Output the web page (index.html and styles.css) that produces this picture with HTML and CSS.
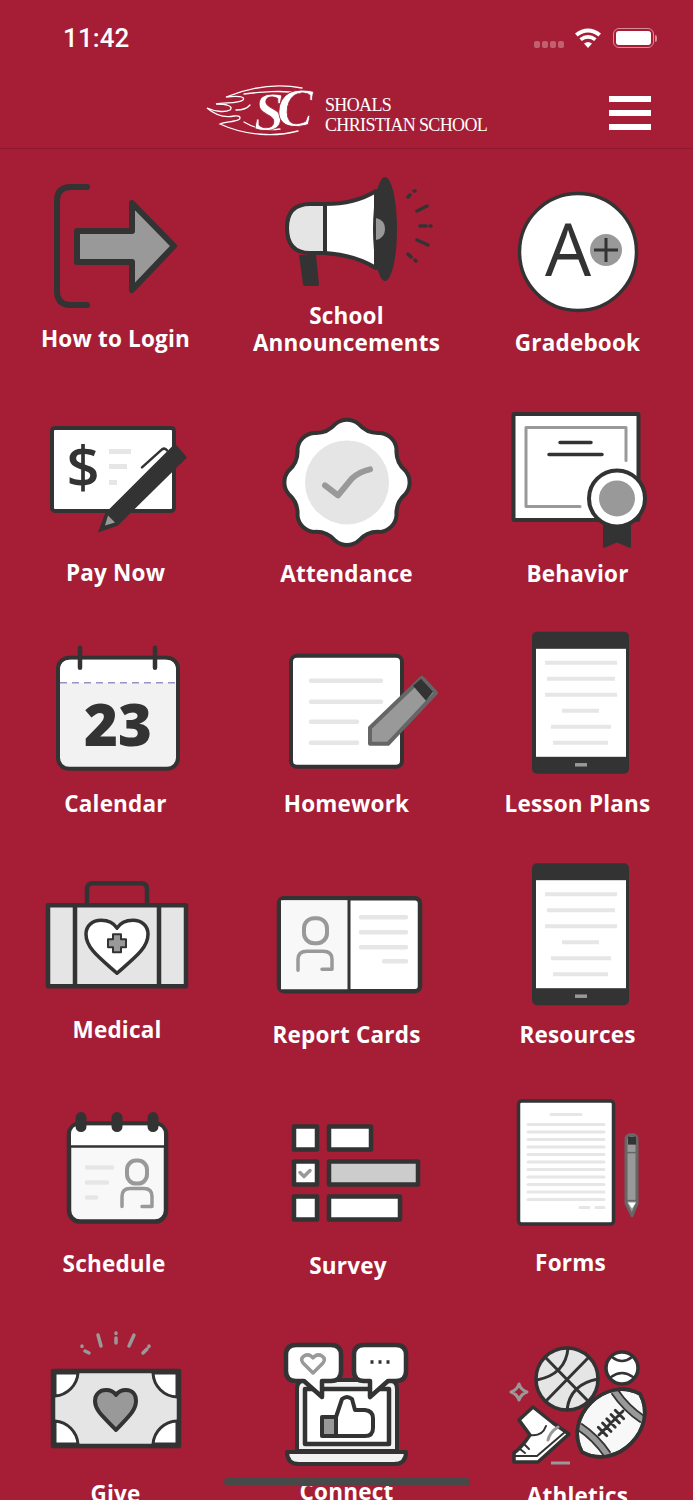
FILE: index.html
```html
<!DOCTYPE html>
<html>
  <head>
    <meta name="viewport" content="width=device-width, initial-scale=1" />
    <title>Shoals Christian School</title>
    <link rel="stylesheet" href="styles.css">
  </head>
  <body>
    <div class="topbar">
      <div class="status">
        <span class="time">11:42</span>
        <div class="status-right">
          <div class="signal"><i></i><i></i><i></i><i></i></div>
          <svg class="wifi" viewBox="0 0 26 20" width="26" height="20">
            <path d="M13 20 L9 15.5 Q13 12.5 17 15.5Z" />
            <path d="M6.8 13 L4.4 10.3 Q13 3.8 21.6 10.3 L19.2 13 Q13 8.4 6.8 13Z" />
            <path d="M2.6 8.4 L0 5.6 Q13 -4.4 26 5.6 L23.4 8.4 Q13 0.6 2.6 8.4Z" />
          </svg>
          <div class="battery"><div class="battery-fill"></div></div>
          <div class="battery-tip"></div>
        </div>
      </div>
      <div class="nav">
        <svg class="logo" viewBox="207 85 108 50" width="108" height="50">
          <path d="M302 88 C275 83 248 88 226 97 C236 96 246 96 243 100 C238 104 224 102 216 104 C226 104 234 106 230 110 C224 113 214 111 207 108 C214 114 224 118 234 116 C242 115 242 120 234 121 C230 122 224 122 220 124 C246 136 276 137 298 131" />
          <path d="M300 93 C280 90 262 92 244 94 M250 105 C246 110 240 110 236 110 M244 122 C254 128 266 131 280 129" />
          <text class="monogram" x="254" y="130">S<tspan dx="-7" dy="-4">C</tspan></text>
        </svg>
        <div class="logo-text">SHOALS<br />CHRISTIAN SCHOOL</div>
        <div class="menu"><i></i><i></i><i></i></div>
      </div>
    </div>

    <div class="grid">
      <!-- row 1 -->
      <div class="cell">
        <svg class="icon" viewBox="0 150 231 179">
          <path d="M87 187 H71 Q57 187 57 201 V291 Q57 305 71 305 H87" stroke-width="6" />
          <path class="g" d="M77 231 H132 V203 L174 246 L132 290 V262 H77Z" stroke-width="6" />
        </svg>
        <div class="label-row"><div class="label up-4">How to Login</div></div>
      </div>
      <div class="cell">
        <svg class="icon" viewBox="231 150 231 179">
          <path class="d" d="M299 255 L316 255 L319 284 Q319 286 317 286 H305 Q303 286 303 284Z" />
          <path class="l" d="M325 204 H310 Q287 204 287 228 Q287 253 310 253 H325Z" stroke-width="4" />
          <path class="w" d="M325 204 Q355 204 376 191 V268 Q355 255 325 253Z" stroke-width="4" />
          <ellipse class="d" cx="385" cy="229" rx="12" ry="52" />
          <path class="g no" d="M376 218 Q385 220 385 229 Q385 238 376 240Z" />
          <path d="M408 197 L410 195 M414 191 L415 191 M417 211 L427 206 M420 226 L426 226 M430 226 L431 226 M417 240 L428 245 M408 254 L411 257 M415 260 L416 261" stroke-width="3.5" />
        </svg>
        <div class="label-row"><div class="label">School<br />Announcements</div></div>
      </div>
      <div class="cell">
        <svg class="icon" viewBox="462 150 231 179">
          <circle class="w" cx="578" cy="252" r="58.5" stroke-width="3.5" />
          <text class="grade" x="568" y="276">A</text>
          <circle class="g no" cx="606" cy="250" r="16" />
          <path d="M594 250 H618 M606 238 V262" stroke-width="3" stroke-linecap="butt" />
        </svg>
        <div class="label-row"><div class="label">Gradebook</div></div>
      </div>

      <!-- row 2 -->
      <div class="cell">
        <svg class="icon" viewBox="0 380.6 231 179">
          <rect class="w" x="52" y="427.5" width="122" height="83" rx="3" stroke-width="4" />
          <text class="dollar" x="83" y="488">$</text>
          <path class="ln" d="M109 451 H131 M109 466 H127 M109 482 H117" stroke-width="5" stroke-linecap="butt" />
          <path d="M142 467 L162 449 Q165 447 167 450" stroke-width="2.5" />
          <path class="d" d="M175 443 L187 457 L118 525 L98 532 L105 513Z" />
          <path class="g no" d="M108 515 L115 522 L105 525Z" />
        </svg>
        <div class="label-row"><div class="label up-1">Pay Now</div></div>
      </div>
      <div class="cell">
        <svg class="icon" viewBox="231 380.6 231 179">
          <path class="w" stroke-width="4" d="M405.4 470.4 A18 18 0 0 1 405.4 493.6 A26 26 0 0 0 396.5 515.1 A18 18 0 0 1 380.1 531.5 A26 26 0 0 0 358.6 540.4 A18 18 0 0 1 335.4 540.4 A26 26 0 0 0 313.9 531.5 A18 18 0 0 1 297.5 515.1 A26 26 0 0 0 288.6 493.6 A18 18 0 0 1 288.6 470.4 A26 26 0 0 0 297.5 448.9 A18 18 0 0 1 313.9 432.5 A26 26 0 0 0 335.4 423.6 A18 18 0 0 1 358.6 423.6 A26 26 0 0 0 380.1 432.5 A18 18 0 0 1 396.5 448.9 A26 26 0 0 0 405.4 470.4Z" />
          <circle class="l no" cx="347" cy="482" r="42" />
          <path class="gl" d="M325 485 L338 495 L352 478 Q360 471 370 469" stroke-width="6" />
        </svg>
        <div class="label-row"><div class="label">Attendance</div></div>
      </div>
      <div class="cell">
        <svg class="icon" viewBox="462 380.6 231 179">
          <rect class="w" x="513.5" y="413.5" width="125" height="106" rx="1" stroke-width="4" />
          <path class="gl" d="M580 506 H526 V427 H626 V460" stroke-width="3" />
          <path d="M560 442 H591 M549 454 H602" stroke-width="3.5" />
          <path class="d" d="M603 520 H631 V546 Q631 548 629 547 L617 542 L605 547 Q603 548 603 546Z" />
          <circle class="w" cx="617" cy="498" r="28" stroke-width="4" />
          <circle class="g no" cx="617" cy="498" r="18" />
        </svg>
        <div class="label-row"><div class="label">Behavior</div></div>
      </div>

      <!-- row 3 -->
      <div class="cell">
        <svg class="icon" viewBox="0 611.2 231 179">
          <rect class="o" x="58" y="658" width="120" height="111" rx="11" stroke-width="4" />
          <path class="w no" d="M60 683 V671 Q60 660 71 660 H165 Q176 660 176 671 V683Z" />
          <path class="dash" d="M60 683 H176" stroke-width="1.5" />
          <path d="M80 648 V668 M155 648 V668" stroke-width="4.5" />
          <text class="date" x="118" y="746">23</text>
        </svg>
        <div class="label-row"><div class="label">Calendar</div></div>
      </div>
      <div class="cell">
        <svg class="icon" viewBox="231 611.2 231 179">
          <rect class="w" x="291" y="656" width="111" height="111" rx="6" stroke-width="4" />
          <path class="ln" d="M311 681 H381 M311 702 H381 M311 722 H357 M311 743 H357" stroke-width="4.5" />
          <path class="g pen" d="M370 744 V728 L422 678 L436 693 L388 744Z" stroke-width="4" />
          <path class="d" d="M413 686 L421 679 L433 692 L426 701Z" />
        </svg>
        <div class="label-row"><div class="label">Homework</div></div>
      </div>
      <div class="cell">
        <svg class="icon" viewBox="462 611.2 231 179">
          <g id="tablet">
            <rect class="d" x="532" y="632" width="97" height="142" rx="5" />
            <rect class="w no" x="536" y="649" width="90" height="108" />
            <path class="ln" d="M545 663 H617 M547 679 H615 M545 695 H617 M562 711 H599 M551 727 H611 M553 743 H608" stroke-width="4" stroke-linecap="butt" />
            <path class="gl" d="M575 765 H587" stroke-width="3.5" stroke-linecap="butt" />
          </g>
        </svg>
        <div class="label-row"><div class="label">Lesson Plans</div></div>
      </div>

      <!-- row 4 -->
      <div class="cell">
        <svg class="icon" viewBox="0 841.8 231 179">
          <path d="M87 903 V889 Q87 883 93 883 H141 Q147 883 147 889 V903" stroke-width="4.5" />
          <rect class="l" x="48" y="905" width="138" height="81" stroke-width="4.5" />
          <path d="M75 905 V986 M159 905 V986" stroke-width="4.5" />
          <path class="w" d="M117 973 C100 958 86 948 86 934 C86 925 93 920 101 920 C108 920 114 923 117 928 C120 923 126 920 133 920 C141 920 148 925 148 934 C148 948 134 958 117 973Z" stroke-width="3.5" />
          <path class="g" d="M113 934 H121 V939 H126 V947 H121 V952 H113 V947 H108 V939 H113Z" stroke-width="2" />
        </svg>
        <div class="label-row"><div class="label up-5 nudge-r">Medical</div></div>
      </div>
      <div class="cell">
        <svg class="icon" viewBox="231 841.8 231 179">
          <rect class="w" x="279" y="898" width="141" height="93" rx="5" stroke-width="4.5" />
          <path class="soft no" d="M281 900 H349 V989 H281Z" />
          <path d="M349 898 V991" stroke-width="3" />
          <rect class="gl" x="304" y="918" width="23" height="25" rx="10" stroke-width="4" />
          <path class="gl" d="M298 970 V959 Q298 951 307 951 H323 Q332 951 332 959 V969 H322" stroke-width="3.5" />
          <path class="ln" d="M361 917 H406 M361 932 H406 M361 947 H406 M384 961 H406" stroke-width="4.5" />
        </svg>
        <div class="label-row"><div class="label">Report Cards</div></div>
      </div>
      <div class="cell">
        <svg class="icon" viewBox="462 841.8 231 179"><use href="#tablet" y="231" /></svg>
        <div class="label-row"><div class="label">Resources</div></div>
      </div>

      <!-- row 5 -->
      <div class="cell">
        <svg class="icon" viewBox="0 1072.4 231 179">
          <rect class="soft" x="69" y="1124" width="97" height="98" rx="11" stroke-width="4.5" />
          <path class="w no" d="M71 1146 V1135 Q71 1126 80 1126 H155 Q164 1126 164 1135 V1146Z" />
          <path d="M69 1147 H166" stroke-width="2.5" stroke-linecap="butt" />
          <path d="M81 1118 V1127 M117 1118 V1127 M153 1118 V1127" stroke-width="11" />
          <path class="ln" d="M87 1168 H112 M87 1183 H107 M87 1198 H96" stroke-width="4.5" />
          <rect class="gl" x="127" y="1161" width="20" height="23" rx="9" stroke-width="4" />
          <path class="gl" d="M122 1207 V1197 Q122 1189 130 1189 H144 Q152 1189 152 1197 V1207 H142" stroke-width="3.5" />
        </svg>
        <div class="label-row"><div class="label up-1 nudge-l">Schedule</div></div>
      </div>
      <div class="cell">
        <svg class="icon" viewBox="231 1072.4 231 179">
          <rect class="w" x="294" y="1127" width="23" height="23" stroke-width="4.5" />
          <rect class="w" x="329" y="1127" width="42" height="23" stroke-width="4.5" />
          <rect class="w" x="294" y="1162" width="23" height="23" stroke-width="4.5" />
          <rect class="mid" x="329" y="1162" width="89" height="23" stroke-width="4.5" />
          <rect class="w" x="294" y="1197" width="23" height="23" stroke-width="4.5" />
          <rect class="w" x="329" y="1197" width="71" height="23" stroke-width="4.5" />
          <path class="gl" d="M300 1173 L304 1177 L310 1171" stroke-width="3.5" />
        </svg>
        <div class="label-row"><div class="label down-1 nudge-r">Survey</div></div>
      </div>
      <div class="cell">
        <svg class="icon" viewBox="462 1072.4 231 179">
          <rect class="w" x="518.5" y="1101.5" width="95" height="123" rx="3" stroke-width="3.5" />
          <path class="ln" d="M551 1115 H581 M528 1125 H604 M528 1132.5 H604 M528 1140 H604 M528 1147.5 H604 M528 1155 H604 M528 1162.5 H604 M528 1170 H604 M528 1177.5 H604 M528 1185 H604 M528 1192.5 H604 M528 1200 H604 M580 1208 H589 M596 1208 H604" stroke-width="3" />
          <path class="g pen" d="M626 1140 Q626 1135 632 1135 Q637 1135 637 1140 V1204 L632 1216 L626 1204Z" stroke-width="3" />
          <rect class="d" x="628" y="1137" width="8" height="8" />
          <path class="w no" d="M628 1203 H636 L632 1209Z" />
          <path class="pen" d="M627 1153 H637" stroke-width="1.5" stroke-linecap="butt" />
          <path class="pen" d="M627 1201 H637" stroke-width="1.5" stroke-linecap="butt" />
        </svg>
        <div class="label-row"><div class="label up-2 forms">Forms</div></div>
      </div>

      <!-- row 6 -->
      <div class="cell">
        <svg class="icon" viewBox="0 1303 231 179">
          <path class="gl" d="M98 1335 L101 1346 M134 1335 L129 1346 M116 1333 V1333.5 M116 1338 V1343 M82 1346 V1346.5 M85 1351 L89 1353 M149 1346 V1346.5 M147 1349 L143 1353" stroke-width="3.5" />
          <rect class="l" x="53" y="1371" width="126" height="75" stroke-width="4.5" />
          <path class="w" d="M55 1373 H78 A25 25 0 0 1 55 1396Z M177 1373 H153 A25 25 0 0 0 177 1397Z M55 1444 H78 A25 25 0 0 0 55 1421Z M177 1444 H153 A25 25 0 0 1 177 1421Z" stroke-width="3" />
          <path class="g" d="M116 1430 C105 1418 95 1411 95 1401 C95 1394 100 1390 106 1390 C110 1390 114 1392 116 1395 C118 1392 122 1390 126 1390 C132 1390 136 1394 136 1401 C136 1411 127 1418 116 1430Z" stroke-width="4" />
        </svg>
        <div class="label-row"><div class="label up-2">Give</div></div>
      </div>
      <div class="cell">
        <svg class="icon" viewBox="231 1303 231 179">
          <path class="o" d="M297 1451 V1389 Q297 1380 306 1380 H388 Q397 1380 397 1389 V1451Z" stroke-width="4" />
          <rect class="w" x="305" y="1389" width="84" height="55" stroke-width="4.5" />
          <path class="w" d="M336 1417 L342 1399 Q347 1395 352 1399 L355 1410 H365 Q373 1411 373 1418 V1428 Q373 1436 365 1436 H336Z" stroke-width="4" />
          <rect class="g" x="322" y="1417" width="14" height="19" stroke-width="4" />
          <path class="o" d="M287 1452 H406 Q406 1464 394 1464 H299 Q287 1464 287 1452Z" stroke-width="4" />
          <path class="w" d="M296 1345 H331 Q341 1345 341 1355 V1371 Q341 1381 331 1381 H322 V1397 L304 1381 H296 Q286 1381 286 1371 V1355 Q286 1345 296 1345Z" stroke-width="4.5" />
          <path class="gl" d="M313 1373 L303 1363 Q300 1359 304 1356 Q309 1353 313 1358 Q317 1353 322 1356 Q326 1359 323 1363Z" stroke-width="3.5" />
          <path class="w" d="M364 1345 H396 Q406 1345 406 1355 V1371 Q406 1381 396 1381 H388 L370 1397 V1381 H364 Q354 1381 354 1371 V1355 Q354 1345 364 1345Z" stroke-width="4.5" />
          <path d="M370.5 1362 H373.5 M378.5 1362 H381.5 M386.5 1362 H389.5" stroke-width="3.5" stroke-linecap="butt" />
        </svg>
        <div class="label-row"><div class="label up-4">Connect</div></div>
      </div>
      <div class="cell">
        <svg class="icon" viewBox="462 1303 231 179">
          <circle class="l" cx="567" cy="1379" r="31" stroke-width="3.5" />
          <path d="M546 1358 L588 1401 M588 1358 L546 1401 M568 1348 Q566 1374 537 1380 M598 1379 Q570 1384 567 1410" stroke-width="3" />
          <circle class="w" cx="622" cy="1368" r="16" stroke-width="3.5" />
          <path d="M612 1357 Q622 1365 632 1357 M611 1377 Q622 1369 633 1377" stroke-width="2.5" />
          <path class="gl" d="M519 1384 Q521 1390 527 1392 Q521 1394 519 1400 Q517 1394 511 1392 Q517 1390 519 1384Z" stroke-width="3" />
          <g transform="translate(611 1423) rotate(-45)">
            <path class="soft" d="M-41 0 C-30 -38 30 -38 41 0 C30 38 -30 38 -41 0Z" stroke-width="3.5" />
            <path d="M-25 -20 Q-21 0 -25 20 M25 -20 Q21 0 25 20" stroke-width="9" stroke-linecap="butt" />
            <path class="gl" d="M-25 -20 Q-21 0 -25 20 M25 -20 Q21 0 25 20" stroke-width="5.5" stroke-linecap="butt" />
            <path d="M-41 0 C-30 -38 30 -38 41 0 C30 38 -30 38 -41 0Z" stroke-width="3.5" />
            <path d="M-17 0 H17 M-12 -6 V6 M-6 -6 V6 M0 -6 V6 M6 -6 V6 M12 -6 V6" stroke-width="2.8" />
          </g>
          <path class="w" d="M533 1407 L519 1420 L530 1435 Q522 1447 514 1453 V1462 H538 L569 1434 L553 1423Z" stroke-width="3.5" />
          <path d="M515 1456 H537 L565 1432 M530 1435 Q542 1437 546 1426 M524 1444 L529 1449 M520 1449 L525 1453" stroke-width="2" />
          <path class="gl" d="M558 1427 Q550 1432 548 1440" stroke-width="3" />
          <path class="gl" d="M551 1463 H570" stroke-width="3" stroke-linecap="butt" />
        </svg>
        <div class="label-row"><div class="label">Athletics</div></div>
      </div>
    </div>

    <div class="home-bar"></div>
  </body>
</html>
```

FILE: styles.css
```css
* {
  box-sizing: border-box;
}

html,
body {
  height: 1500px;
  overflow: hidden;
}

body {
  margin: 0;
  position: relative;
  background-color: #a51e36;
  color: white;
  font-family: "Open Sans", Arial, sans-serif;
}

/* Status bar and logo row */
.topbar {
  height: 149px;
  border-bottom: 1px solid #8f1a2f;
}

.status {
  display: flex;
  align-items: flex-start;
  height: 76px;
  padding: 23px 36px 0 63px;
}

.time {
  font-family: Roboto, sans-serif;
  font-size: 26px;
  font-weight: 500;
  line-height: 31px;
  letter-spacing: 0.1px;
}

.status-right {
  display: flex;
  align-items: center;
  margin-left: auto;
  padding-top: 5px;
}

.signal {
  display: flex;
  gap: 2px;
  margin: 13px 11px 0 0;
}

.signal i {
  width: 6px;
  height: 7px;
  border-radius: 2px;
  background: rgba(255, 255, 255, 0.3);
}

.wifi {
  fill: white;
  margin-right: 12px;
}

.battery {
  width: 41px;
  height: 20px;
  padding: 2px;
  border: 1.5px solid rgba(255, 255, 255, 0.5);
  border-radius: 6px;
}

.battery-fill {
  height: 100%;
  border-radius: 3px;
  background: white;
}

.battery-tip {
  width: 2px;
  height: 7px;
  margin-left: 1px;
  border-radius: 0 2px 2px 0;
  background: rgba(255, 255, 255, 0.5);
}

.nav {
  display: flex;
  align-items: flex-start;
  padding: 9px 42px 0 207px;
}

.logo {
  flex: none;
  fill: none;
  stroke: white;
  stroke-width: 1.3;
  stroke-linecap: round;
  overflow: visible;
}

.logo .monogram {
  font-family: "Liberation Serif", serif;
  font-size: 54px;
  font-weight: bold;
  font-style: italic;
  fill: white;
  stroke: #a51e36;
  stroke-width: 0.8;
}

.logo-text {
  margin: 10px 0 0 10px;
  font-family: "Liberation Serif", serif;
  font-size: 18px;
  line-height: 20px;
  letter-spacing: -0.65px;
  white-space: nowrap;
}

.menu {
  display: flex;
  flex-direction: column;
  gap: 8px;
  margin: 11px 0 0 auto;
}

.menu i {
  width: 42px;
  height: 6px;
  background: white;
}

/* Tile grid */
.grid {
  display: grid;
  grid-template-columns: repeat(3, 231px);
  grid-auto-rows: 230.6px;
  padding-top: 1px;
}

.cell {
  display: flex;
  flex-direction: column;
}

.label-row {
  display: flex;
  align-items: flex-end;
  justify-content: center;
  height: 27px;
}

.label {
  flex: none;
  font-size: 22.5px;
  font-weight: 700;
  line-height: 27px;
  letter-spacing: 0.2px;
  text-align: center;
  white-space: nowrap;
}

.up-1 {
  margin-bottom: 1px;
}

.up-2 {
  margin-bottom: 2px;
}

.up-4 {
  margin-bottom: 4px;
}

.up-5 {
  margin-bottom: 5px;
}

.down-1 {
  margin-bottom: -1px;
}

.nudge-r {
  margin-left: 3px;
}

.nudge-l {
  margin-right: 3px;
}

.forms {
  margin-right: 14px;
}

/* Icons, drawn with the grey palette */
.icon {
  display: block;
  flex: none;
  width: 231px;
  height: 179px;
  overflow: visible;
  fill: none;
  stroke: #333;
  stroke-linecap: round;
  stroke-linejoin: round;
}

.icon .w {
  fill: white;
}

.icon .l {
  fill: #e5e5e5;
}

.icon .g {
  fill: #999;
}

.icon .o {
  fill: #f2f2f2;
}

.icon .soft {
  fill: #f8f8f8;
}

.icon .mid {
  fill: #ccc;
}

.icon .d {
  fill: #333;
  stroke: none;
}

.icon .no {
  stroke: none;
}

.icon .ln {
  stroke: #e6e6e6;
}

.icon .gl {
  stroke: #999;
}

.icon .pen {
  stroke: #666;
}

.icon .dash {
  stroke: #9a92c4;
  stroke-dasharray: 7 5;
  stroke-linecap: butt;
}

.icon text {
  fill: #333;
  stroke: none;
  text-anchor: middle;
  font-family: "Open Sans", Arial, sans-serif;
}

.icon .grade {
  font-size: 73px;
  font-weight: 400;
}

.icon .dollar {
  font-size: 58px;
  font-weight: 600;
}

.icon .date {
  font-size: 58px;
  font-weight: 800;
}

/* iOS home indicator sits over the list */
.home-bar {
  position: absolute;
  left: 224px;
  top: 1478px;
  width: 246px;
  height: 8px;
  border-radius: 4px;
  background: #484848;
}
```
